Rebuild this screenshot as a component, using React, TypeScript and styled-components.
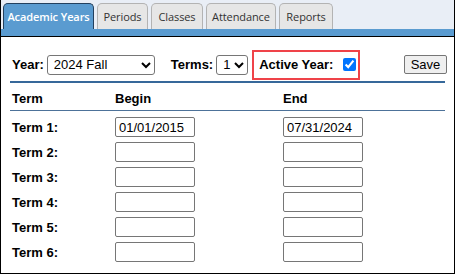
import React from "react";
import styled, { createGlobalStyle } from "styled-components";

const Global = createGlobalStyle`
  html, body { margin: 0; padding: 0; background: #fff; }
  body { width: 455px; height: 274px; overflow: hidden; font-family: "Liberation Sans", Arial, sans-serif; }
`;

const Frame = styled.div`
  box-sizing: border-box;
  width: 455px;
  height: 274px;
  border: 1px solid #000;
  border-top: none;
  display: flex;
  flex-direction: column;
`;

const TabStrip = styled.div`
  background: #e9eef6;
  height: 29px;
  box-sizing: border-box;
  padding: 3px 0 0 2px;
  display: flex;
  align-items: flex-end;
  gap: 3px;
`;

const Tab = styled.div<{ $active?: boolean; $w: number }>`
  box-sizing: border-box;
  width: ${(p) => p.$w}px;
  height: 26px;
  display: flex;
  align-items: center;
  justify-content: center;
  border-radius: 5px 5px 0 0;
  font-family: "Open Sans", sans-serif;
  font-size: 11px;
  letter-spacing: -0.1px;
  font-weight: ${(p) => (p.$active ? 600 : 400)};
  color: ${(p) => (p.$active ? "#fff" : "#333")};
  background: ${(p) => (p.$active ? "#5a9bd0" : "#e6e6e6")};
  border: 1px solid ${(p) => (p.$active ? "#23405e" : "#b3b3b3")};
  border-bottom: none;
  padding-bottom: 1px;
`;

const BlueBar = styled.div`
  height: 7px;
  background: #5a9bd0;
  border-bottom: 1px solid #000;
`;

const Content = styled.div`
  padding: 0 9px 0 9px;
`;

const TopRow = styled.div`
  display: flex;
  align-items: center;
  height: 44px;
  box-sizing: border-box;
`;

const TopInner = styled.div`
  display: flex;
  align-items: center;
  height: 30px;
  margin-top: 11px;
  padding-left: 2px;
  width: 100%;
`;

const Label = styled.span`
  font-family: "Liberation Sans", Arial, sans-serif;
  font-weight: bold;
  font-size: 13px;
  color: #000;
`;

const Select = styled.select<{ $w: number }>`
  box-sizing: border-box;
  width: ${(p) => p.$w}px;
  height: 20px;
  margin-left: 3px;
  font-family: "Liberation Sans", Arial, sans-serif;
  font-size: 13px;
  color: #000;
  border: 1px solid #767676;
  border-radius: 3px;
  background: #fff;
  padding: 0 0 0 2px;
`;

const Spacer = styled.div<{ $w: number }>`
  width: ${(p) => p.$w}px;
  flex: none;
`;

const Highlight = styled.div`
  box-sizing: border-box;
  height: 30px;
  width: 108px;
  border: 2px solid #ef4349;
  display: flex;
  align-items: center;
  padding-left: 5px;
`;

const Check = styled.input`
  width: 13px;
  height: 13px;
  margin: 0 0 0 10px;
  accent-color: #0075ff;
`;

const SaveButton = styled.button`
  box-sizing: border-box;
  margin-left: auto;
  margin-right: -2px;
  width: 43px;
  height: 19px;
  font-family: "Liberation Sans", Arial, sans-serif;
  font-size: 13px;
  color: #000;
  background: #efefef;
  border: 1px solid #767676;
  border-radius: 2px;
  padding: 0;
  align-self: flex-start;
  margin-top: 5px;
`;

const ThickRule = styled.div`
  height: 2px;
  background: #36689a;
`;

const Grid = styled.div`
  display: grid;
  grid-template-columns: 103px 168px 1fr;
  padding-left: 2px;
`;

const HeaderCell = styled.div`
  font-family: "Liberation Sans", Arial, sans-serif;
  font-weight: bold;
  font-size: 13px;
  height: 27px;
  display: flex;
  align-items: center;
  padding-top: 4px;
  box-sizing: border-box;
`;

const ThinRule = styled.div`
  height: 1px;
  background: #4d7299;
`;

const Rows = styled.div`
  display: grid;
  grid-template-columns: 103px 168px 1fr;
  row-gap: 5px;
  padding: 6px 0 0 2px;
`;

const RowLabel = styled.div`
  font-family: "Liberation Sans", Arial, sans-serif;
  font-weight: bold;
  font-size: 13px;
  height: 20px;
  display: flex;
  align-items: center;
`;

const DateInput = styled.input`
  box-sizing: border-box;
  width: 80px;
  height: 20px;
  font-family: "Liberation Sans", Arial, sans-serif;
  font-size: 13px;
  color: #000;
  border: 1px solid #767676;
  border-radius: 2px;
  padding: 0 0 0 3px;
  margin: 0;
`;

const terms = [
  { n: 1, b: "01/01/2015", e: "07/31/2024" },
  { n: 2, b: "", e: "" },
  { n: 3, b: "", e: "" },
  { n: 4, b: "", e: "" },
  { n: 5, b: "", e: "" },
  { n: 6, b: "", e: "" },
];

export default function App() {
  return (
    <>
      <Global />
      <Frame>
        <TabStrip>
          <Tab $active $w={91}>Academic Years</Tab>
          <Tab $w={51}>Periods</Tab>
          <Tab $w={52}>Classes</Tab>
          <Tab $w={70}>Attendance</Tab>
          <Tab $w={54}>Reports</Tab>
        </TabStrip>
        <BlueBar />
        <Content>
          <TopRow>
            <TopInner>
              <Label>Year:</Label>
              <Select $w={108} defaultValue="2024 Fall">
                <option>2024 Fall</option>
                <option>2023 Fall</option>
              </Select>
              <Spacer $w={16} />
              <Label>Terms:</Label>
              <Select $w={32} defaultValue="1">
                <option>1</option>
                <option>2</option>
                <option>3</option>
                <option>4</option>
                <option>5</option>
                <option>6</option>
              </Select>
              <Spacer $w={4} />
              <Highlight>
                <Label>Active Year:</Label>
                <Check type="checkbox" defaultChecked />
              </Highlight>
              <SaveButton>Save</SaveButton>
            </TopInner>
          </TopRow>
          <ThickRule />
          <Grid>
            <HeaderCell>Term</HeaderCell>
            <HeaderCell>Begin</HeaderCell>
            <HeaderCell>End</HeaderCell>
          </Grid>
          <ThinRule />
          <Rows>
            {terms.map((t) => (
              <React.Fragment key={t.n}>
                <RowLabel>Term {t.n}:</RowLabel>
                <div><DateInput defaultValue={t.b} /></div>
                <div><DateInput defaultValue={t.e} /></div>
              </React.Fragment>
            ))}
          </Rows>
        </Content>
      </Frame>
    </>
  );
}
